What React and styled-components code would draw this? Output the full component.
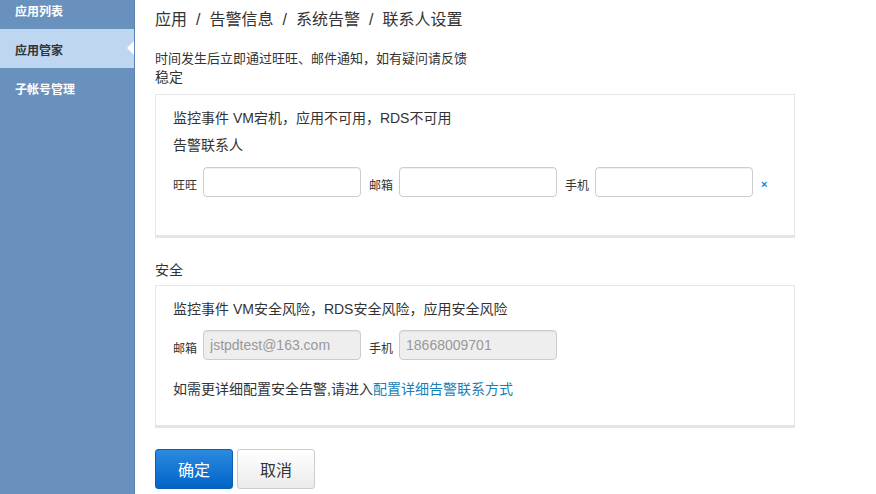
import styled, { createGlobalStyle } from "styled-components"

const GlobalStyle = createGlobalStyle`
    html, body {
        margin: 0;
        padding: 0;
        background: #fff;
    }
    body {
        font-family: "Liberation Sans", "Noto Sans CJK SC", sans-serif;
        color: #333;
    }
`

const navItems = [
    { label: "应用列表" },
    { label: "应用管家", active: true },
    { label: "子帐号管理" },
]

function App(){
    return <>
      <GlobalStyle />
      <Page>
        <Sidebar>
            <NavList>
                {navItems.map((item) => (
                    <NavItem key={item.label} $active={item.active}>
                        {item.label}
                    </NavItem>
                ))}
            </NavList>
        </Sidebar>

        <Main>
            <Breadcrumb>
                应用<Sep>/</Sep>告警信息<Sep>/</Sep>系统告警<Sep>/</Sep>联系人设置
            </Breadcrumb>
            <Desc>时间发生后立即通过旺旺、邮件通知，如有疑问请反馈</Desc>
            <SectionTitle $bottom={7}>稳定</SectionTitle>
            <Card $bottom={38}>
                <CardLine>监控事件 VM宕机，应用不可用，RDS不可用</CardLine>
                <CardLine $top={7}>告警联系人</CardLine>
                <FieldRow $top={12}>
                    <FieldLabel>旺旺</FieldLabel>
                    <StyledInput type="text" />
                    <FieldLabel>邮箱</FieldLabel>
                    <StyledInput type="text" />
                    <FieldLabel>手机</FieldLabel>
                    <StyledInput type="text" />
                    <RemoveMark>×</RemoveMark>
                </FieldRow>
            </Card>

            <SectionTitle $top={22} $bottom={5}>安全</SectionTitle>
            <Card $bottom={26}>
                <CardLine>监控事件 VM安全风险，RDS安全风险，应用安全风险</CardLine>
                <FieldRow $top={11}>
                    <FieldLabel>邮箱</FieldLabel>
                    <StyledInput type="text" value="jstpdtest@163.com" disabled readOnly />
                    <FieldLabel>手机</FieldLabel>
                    <StyledInput type="text" value="18668009701" disabled readOnly />
                </FieldRow>
                <CardLine $top={19}>
                    如需更详细配置安全告警,请进入<StyledLink href="#">配置详细告警联系方式</StyledLink>
                </CardLine>
            </Card>

            <ButtonRow>
                <PrimaryButton type="button">确定</PrimaryButton>
                <DefaultButton type="button">取消</DefaultButton>
            </ButtonRow>
        </Main>
      </Page>
    </>
}

export default App

const Page = styled.div`
    display: flex;
    min-height: 494px;
`

const Sidebar = styled.aside`
    width: 134px;
    flex-shrink: 0;
    background: #6891bd;
    border-right: 1px solid #5a83b0;
    overflow: hidden;
`

const NavList = styled.ul`
    list-style: none;
    margin: -10px 0 0;
    padding: 0;
`

const NavItem = styled.li`
    position: relative;
    height: 33px;
    line-height: 33px;
    padding: 6px 0 0 15px;
    font-size: 12px;
    font-weight: bold;
    color: ${(p) => (p.$active ? "#333" : "#fff")};
    background: ${(p) => (p.$active ? "#bed6ef" : "transparent")};

    &::after {
        content: "";
        display: ${(p) => (p.$active ? "block" : "none")};
        position: absolute;
        right: 0;
        top: 12px;
        border-style: solid;
        border-width: 7px 7px 7px 0;
        border-color: transparent #fff transparent transparent;
    }
`

const Main = styled.main`
    width: 640px;
    padding: 8px 0 0 20px;
`

const Breadcrumb = styled.div`
    font-size: 16px;
    line-height: 24px;
    color: #333;
`

const Sep = styled.span`
    margin: 0 9px;
`

const Desc = styled.p`
    margin: 19px 0 0;
    font-size: 13px;
    line-height: 16px;
`

const SectionTitle = styled.h3`
    margin: ${(p) => p.$top || 0}px 0 ${(p) => p.$bottom}px;
    font-size: 14px;
    font-weight: normal;
    line-height: 20px;
`

const Card = styled.section`
    border: 1px solid #e6e6e6;
    border-bottom: 3px solid #e4e4e4;
    padding: 13px 17px ${(p) => p.$bottom}px;
`

const CardLine = styled.div`
    margin-top: ${(p) => p.$top || 0}px;
    font-size: 14px;
    line-height: 20px;
`

const FieldRow = styled.div`
    display: flex;
    align-items: center;
    margin-top: ${(p) => p.$top || 0}px;
`

const FieldLabel = styled.label`
    font-size: 12px;
    margin-right: 6px;
    padding-top: 4px;
`

const StyledInput = styled.input`
    box-sizing: border-box;
    width: 158px;
    height: 30px;
    margin-right: 8px;
    padding: 0 6px;
    border: 1px solid #ccc;
    border-radius: 4px;
    font-family: inherit;
    font-size: 14px;
    color: #555;
    background: #fff;
    box-shadow: inset 0 1px 1px rgba(0, 0, 0, 0.06);

    &:disabled {
        background: #eee;
        color: #999;
    }
`

const RemoveMark = styled.span`
    margin-left: 0;
    font-size: 11px;
    font-weight: bold;
    color: #1a7fd8;
    padding-top: 3px;
`

const StyledLink = styled.a`
    color: #1a7fb8;
    text-decoration: none;
`

const ButtonRow = styled.div`
    display: flex;
    gap: 4px;
    margin-top: 21px;
`

const BaseButton = styled.button`
    width: 78px;
    height: 40px;
    border-radius: 3px;
    font-family: inherit;
    font-size: 16px;
    cursor: pointer;
`

const PrimaryButton = styled(BaseButton)`
    color: #fff;
    border: 1px solid #0a5fb4;
    background: linear-gradient(#2b8ae0, #0064c8);
`

const DefaultButton = styled(BaseButton)`
    color: #333;
    border: 1px solid #ccc;
    background: linear-gradient(#fff, #ebebeb);
`
